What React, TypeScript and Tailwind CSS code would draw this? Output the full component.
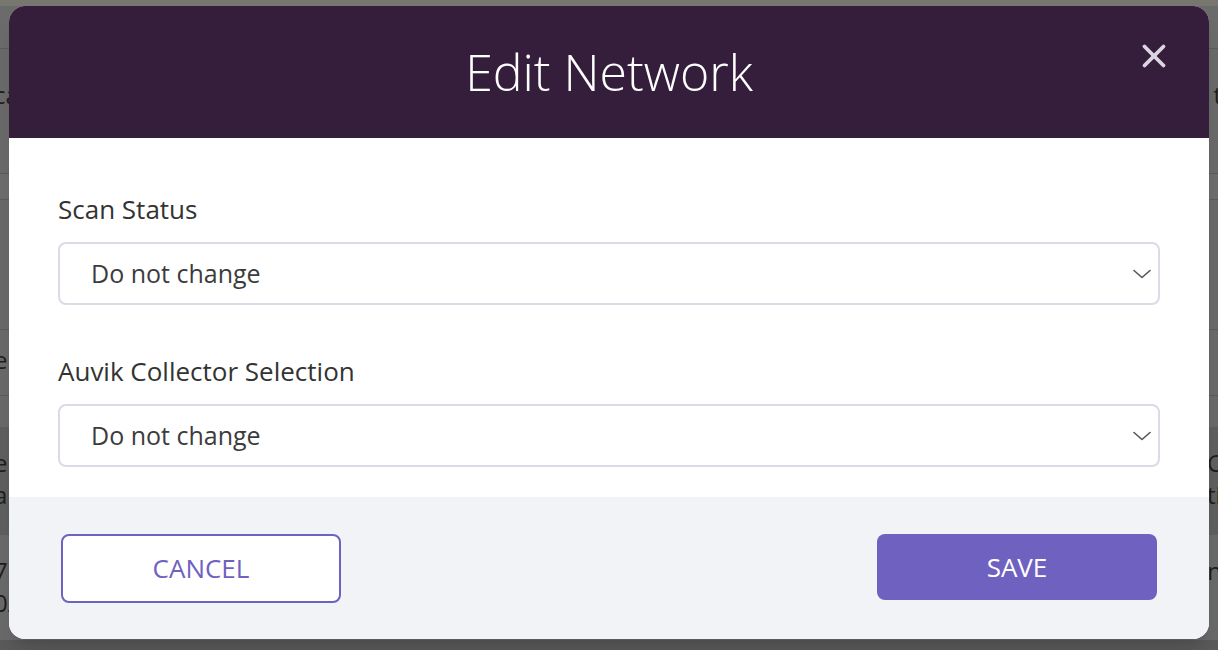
import { X } from 'lucide-react';

const font = { fontFamily: '"Open Sans", "Noto Sans", sans-serif' };

// Rows of the dimmed page behind the dialog (only the edges show)
const backdropRows = [
  { h: 'h-[6px]', bg: 'bg-[#78776f]', pad: '', left: '', right: '' },
  { h: 'h-[43px]', bg: 'bg-[#6b6b6b] border-b border-[#5c5c5c]', pad: '', left: '', right: '' },
  { h: 'h-[125px]', bg: 'bg-[#6a6a6a] border-b border-[#5c5c5c]', pad: 'pt-[30px]', left: 'ca', right: 't' },
  { h: 'h-[26px]', bg: 'bg-[#6d6d6d] border-b border-[#5c5c5c]', pad: '', left: '', right: '' },
  { h: 'h-[130px]', bg: 'bg-[#6a6a6a] border-b border-[#5c5c5c]', pad: 'pt-[42px]', left: 'l', right: '' },
  { h: 'h-[66px]', bg: 'bg-[#6a6a6a] border-b border-[#5c5c5c]', pad: 'pt-[14px]', left: 'e', right: '' },
  { h: 'h-[31px]', bg: 'bg-[#6a6a6a]', pad: '', left: '', right: '' },
  { h: 'h-[108px]', bg: 'bg-[#5f5f5f]', pad: 'pt-[20px]', left: 'e\na', right: 'C\nti' },
  { h: 'h-[105px]', bg: 'bg-[#6a6a6a]', pad: 'pt-[20px]', left: '7\n0/', right: 'n' },
  { h: 'h-[10px]', bg: 'bg-[#5a5a5a]', pad: '', left: '', right: '' },
];

function Chevron() {
  return (
    <svg width="18" height="10" viewBox="0 0 18 10" fill="none" className="text-[#555]">
      <path d="M1 1.5 9 8.5 17 1.5" stroke="currentColor" strokeWidth="1.6" strokeLinecap="round" strokeLinejoin="round" />
    </svg>
  );
}

function Field({ label }: { label: string }) {
  return (
    <div>
      <div className="h-[36px] leading-[36px] text-[26px] text-[#333]">{label}</div>
      <div className="mt-[15px] h-[63px] rounded-[8px] border-2 border-[#dcdae6] bg-white flex items-center justify-between pl-[31px] pr-[7px]">
        <span className="text-[25px] text-[#3c3c3c]">Do not change</span>
        <Chevron />
      </div>
    </div>
  );
}

export default function App() {
  return (
    <div className="relative w-[1218px] h-[650px] overflow-hidden bg-[#6a6a6a]" style={font}>
      {/* dimmed page */}
      <div className="flex flex-col">
        {backdropRows.map((r, i) => (
          <div key={i} className={`${r.h} ${r.bg} ${r.pad} flex items-start justify-between text-[24px] leading-[32px] text-[#1e1e1e] overflow-hidden`}>
            <div className="whitespace-pre -ml-[6px]">{r.left}</div>
            <div className="whitespace-pre -mr-[4px]">{r.right}</div>
          </div>
        ))}
      </div>

      {/* dialog */}
      <div className="absolute inset-0 flex justify-center pt-[6px]">
        <div className="w-[1200px] h-[633px] rounded-[16px] overflow-hidden bg-white shadow-xl flex flex-col">
          <div className="relative h-[132px] bg-[#351e3b] flex items-center justify-center">
            <h1 className="text-[50px] text-white font-light">Edit Network</h1>
            <button className="absolute right-[36px] top-[31px] text-[#dcd6e2]">
              <X className="w-[38px] h-[38px]" strokeWidth={2.4} />
            </button>
          </div>

          <div className="px-[49px] pt-[53px] pb-[30px] flex flex-col gap-[48px]">
            <Field label="Scan Status" />
            <Field label="Auvik Collector Selection" />
          </div>

          <div className="flex-1 bg-[#f2f3f7] flex items-start justify-between px-[52px] pt-[37px]">
            <button className="w-[280px] h-[69px] rounded-[8px] border-2 border-[#6f61c0] bg-white text-[26px] text-[#6f61c0]">
              CANCEL
            </button>
            <button className="w-[280px] h-[66px] rounded-[8px] bg-[#6f61c0] text-[26px] text-white">
              SAVE
            </button>
          </div>
        </div>
      </div>
    </div>
  );
}
